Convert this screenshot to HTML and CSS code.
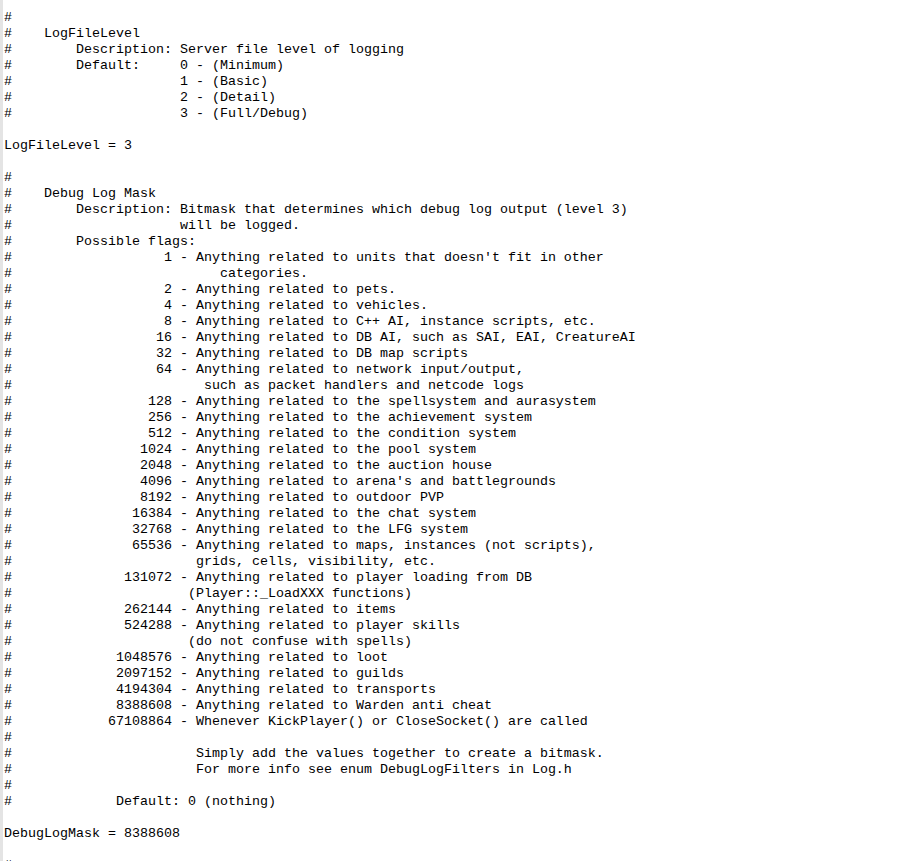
FILE: index.html
```html
<!DOCTYPE html>
<html>
<head>
<meta charset="utf-8">
<title>worldserver.conf</title>
<link rel="stylesheet" href="styles.css">
</head>
<body>
<div class="editor">
<div class="gutter"></div>
<pre class="text">#
#    LogFileLevel
#        Description: Server file level of logging
#        Default:     0 - (Minimum)
#                     1 - (Basic)
#                     2 - (Detail)
#                     3 - (Full/Debug)

LogFileLevel = 3

#
#    Debug Log Mask
#        Description: Bitmask that determines which debug log output (level 3)
#                     will be logged.
#        Possible flags:
#                   1 - Anything related to units that doesn't fit in other
#                          categories.
#                   2 - Anything related to pets.
#                   4 - Anything related to vehicles.
#                   8 - Anything related to C++ AI, instance scripts, etc.
#                  16 - Anything related to DB AI, such as SAI, EAI, CreatureAI
#                  32 - Anything related to DB map scripts
#                  64 - Anything related to network input/output,
#                        such as packet handlers and netcode logs
#                 128 - Anything related to the spellsystem and aurasystem
#                 256 - Anything related to the achievement system
#                 512 - Anything related to the condition system
#                1024 - Anything related to the pool system
#                2048 - Anything related to the auction house
#                4096 - Anything related to arena's and battlegrounds
#                8192 - Anything related to outdoor PVP
#               16384 - Anything related to the chat system
#               32768 - Anything related to the LFG system
#               65536 - Anything related to maps, instances (not scripts),
#                       grids, cells, visibility, etc.
#              131072 - Anything related to player loading from DB
#                      (Player::_LoadXXX functions)
#              262144 - Anything related to items
#              524288 - Anything related to player skills
#                      (do not confuse with spells)
#             1048576 - Anything related to loot
#             2097152 - Anything related to guilds
#             4194304 - Anything related to transports
#             8388608 - Anything related to Warden anti cheat
#            67108864 - Whenever KickPlayer() or CloseSocket() are called
#
#                       Simply add the values together to create a bitmask.
#                       For more info see enum DebugLogFilters in Log.h
#
#             Default: 0 (nothing)

DebugLogMask = 8388608

#
</pre>
</div>
</body>
</html>
```

FILE: styles.css
```css
html, body {
  margin: 0;
  padding: 0;
  background: #ffffff;
  height: 100%;
  overflow: hidden;
}

.editor {
  display: flex;
  min-height: 100%;
}

.gutter {
  width: 3px;
  flex: 0 0 3px;
  background: #e4e4e4;
}

.text {
  margin: 0;
  padding: 10px 0 0 1px;
  font-family: "Courier New", "Liberation Mono", monospace;
  font-size: 13.333px;
  line-height: 16px;
  color: #000000;
  white-space: pre;
}
```
